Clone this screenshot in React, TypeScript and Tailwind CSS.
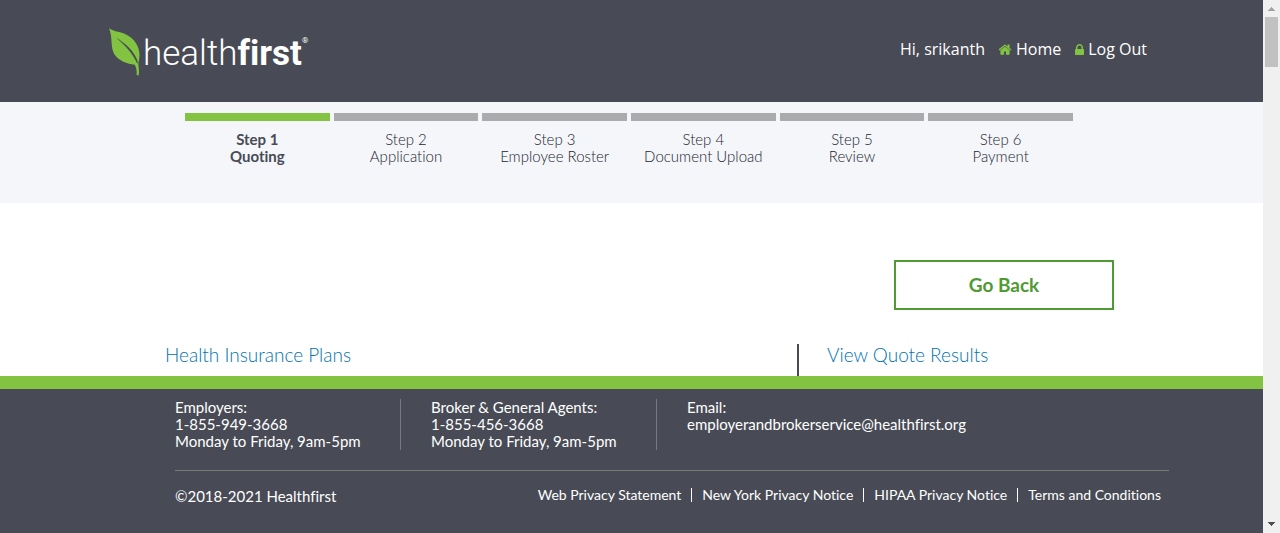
const steps = [
  { name: "Step 1", title: "Quoting", current: true },
  { name: "Step 2", title: "Application", current: false },
  { name: "Step 3", title: "Employee Roster", current: false },
  { name: "Step 4", title: "Document Upload", current: false },
  { name: "Step 5", title: "Review", current: false },
  { name: "Step 6", title: "Payment", current: false },
];

const legalLinks = [
  "Web Privacy Statement",
  "New York Privacy Notice",
  "HIPAA Privacy Notice",
  "Terms and Conditions",
];

function Logo() {
  return (
    <a href="#" className="flex items-start text-white">
      <svg viewBox="0 0 34 50" className="h-[50px] w-[34px]" aria-hidden="true">
        <path
          d="M0 .5C5 3.500 10 3.500 15 5.500C20.500 8 24.500 11 27.500 16C30.500 21.500 31 26.500 30.200 31C29.700 33.500 29.300 35 29.400 37C29.600 40 30.600 43 29.600 47.500L27.600 47C28 43 27.500 40 25.800 36.800C18 35.800 10 33 5.500 26.500C1 19 4 9 0 .5Z"
          fill="#82c341"
        />
        <path
          d="M7 9.500C15 14.500 26 23 29 34.500L28.200 35.500C24 26 16 17 7 9.500Z"
          fill="#484b56"
        />
      </svg>
      <span className="flex items-start font-['Roboto','Open_Sans',sans-serif] text-[35px] leading-[51px]">
        <span className="font-light">health</span>
        <span className="font-bold">first</span>
        <span className="pt-2 text-[8px] leading-[10px]">®</span>
      </span>
    </a>
  );
}

function HomeIcon() {
  return (
    <svg viewBox="80 230 1632 1320" className="h-[11px] w-[13px]" fill="#82c341" aria-hidden="true">
      <path d="M1408 992v480q0 26-19 45t-45 19h-384v-384h-256v384h-384q-26 0-45-19t-19-45v-480q0-1 .5-3t.5-3l575-474 575 474q1 2 1 6zm223-69l-62 74q-8 9-21 11h-3q-13 0-21-7l-692-577-692 577q-12 8-24 7-13-2-21-11l-62-74q-8-10-7-23.500t11-21.500l719-599q32-26 76-26t76 26l244 204v-195q0-14 9-23t23-9h192q14 0 23 9t9 23v408l219 182q10 8 11 21.500t-7 23.500z" />
    </svg>
  );
}

function LockIcon() {
  return (
    <svg viewBox="320 128 1152 1408" className="h-[11px] w-[9px]" fill="#82c341" aria-hidden="true">
      <path d="M640 768h512v-192q0-106-75-181t-181-75-181 75-75 181v192zm832 96v576q0 40-28 68t-68 28h-960q-40 0-68-28t-28-68v-576q0-40 28-68t68-28h32v-192q0-184 132-316t316-132 316 132 132 316v192h32q40 0 68 28t28 68z" />
    </svg>
  );
}

function Header() {
  return (
    <header className="flex h-[102px] items-start justify-between bg-[#484b56] pl-[109px] pr-[116px] pt-7">
      <Logo />
      <nav className="flex gap-[14px] pt-[9px] font-['Open_Sans','Noto_Sans',sans-serif] text-base text-white">
        <span>Hi, srikanth</span>
        <a href="#" className="flex items-center gap-1">
          <HomeIcon />
          Home
        </a>
        <a href="#" className="flex items-center gap-1">
          <LockIcon />
          Log Out
        </a>
      </nav>
    </header>
  );
}

function Steps() {
  return (
    <section className="h-[101px] bg-[#f4f6fa] px-[185px] pt-[11px]">
      <ol className="grid max-w-[888px] grid-cols-6 gap-1 text-center text-[15px] leading-[17px]">
        {steps.map((step) => (
          <li
            key={step.name}
            aria-current={step.current ? "step" : undefined}
            className={step.current ? "font-bold text-[#484b56]" : "font-light text-[#22252e]"}
          >
            <div className={step.current ? "mb-[10px] h-2 bg-[#82c341]" : "mb-[10px] h-2 bg-[#a9abad]"} />
            <div>{step.name}</div>
            <div>{step.title}</div>
          </li>
        ))}
      </ol>
    </section>
  );
}

function Footer() {
  return (
    <footer className="grow border-t-[13px] border-[#82c341] bg-[#484b56] pl-[175px] pr-[94px] pt-[10px] text-[15px] leading-[17px] text-white">
      <div className="flex border-b border-[#77797d] pb-5">
        <div className="mr-[30px] w-[226px] border-r border-[#77797d]">
          <p>Employers:</p>
          <p>1-855-949-3668</p>
          <p>Monday to Friday, 9am-5pm</p>
        </div>
        <div className="mr-[30px] w-[226px] border-r border-[#77797d]">
          <p>Broker &amp; General Agents:</p>
          <p>1-855-456-3668</p>
          <p>Monday to Friday, 9am-5pm</p>
        </div>
        <div>
          <p>Email:</p>
          <a href="#">employerandbrokerservice@healthfirst.org</a>
        </div>
      </div>
      <div className="flex items-start justify-between pt-[17px]">
        <p>©2018-2021 Healthfirst</p>
        <ul className="flex pr-2 text-sm leading-[14px]">
          {legalLinks.map((link) => (
            <li key={link} className="border-r border-white px-[10px] first:pl-0 last:border-r-0 last:pr-0">
              <a href="#">{link}</a>
            </li>
          ))}
        </ul>
      </div>
    </footer>
  );
}

function Scrollbar() {
  return (
    <div className="flex w-[17px] shrink-0 flex-col items-center bg-[#f0f0f0]" aria-hidden="true">
      <svg viewBox="0 0 17 17" className="size-[17px]" shapeRendering="crispEdges">
        <path d="M5 11H12V10H11V9H10V8H9V7H8V8H7V9H6V10H5Z" fill="#a3a3a3" />
      </svg>
      <div className="h-[50px] w-[13px] bg-[#c1c1c1]" />
      <svg viewBox="0 0 17 17" className="mt-auto size-[17px]" shapeRendering="crispEdges">
        <path d="M5 6H12V7H11V8H10V9H9V10H8V9H7V8H6V7H5Z" fill="#505050" />
      </svg>
    </div>
  );
}

export default function App() {
  return (
    <div className="flex min-h-screen bg-white font-['Lato','Open_Sans',sans-serif] [font-variant-ligatures:none]">
      <div className="flex min-w-0 grow flex-col">
        <Header />
        <Steps />
        <main>
          <div className="flex justify-end pr-[149px] pt-[57px]">
            <button
              type="button"
              className="h-[50px] w-[220px] border-2 border-[#4f9a33] text-[19px] font-bold text-[#4f9a33]"
            >
              Go Back
            </button>
          </div>
          <div className="mt-[34px] flex pl-[165px] text-[19px] leading-[22px] text-[#0074b0]">
            <h2 className="w-[632px] font-light">Health Insurance Plans</h2>
            <h2 className="h-8 border-l-2 border-[#484b56] pl-7 font-light">View Quote Results</h2>
          </div>
        </main>
        <Footer />
      </div>
      <Scrollbar />
    </div>
  );
}
